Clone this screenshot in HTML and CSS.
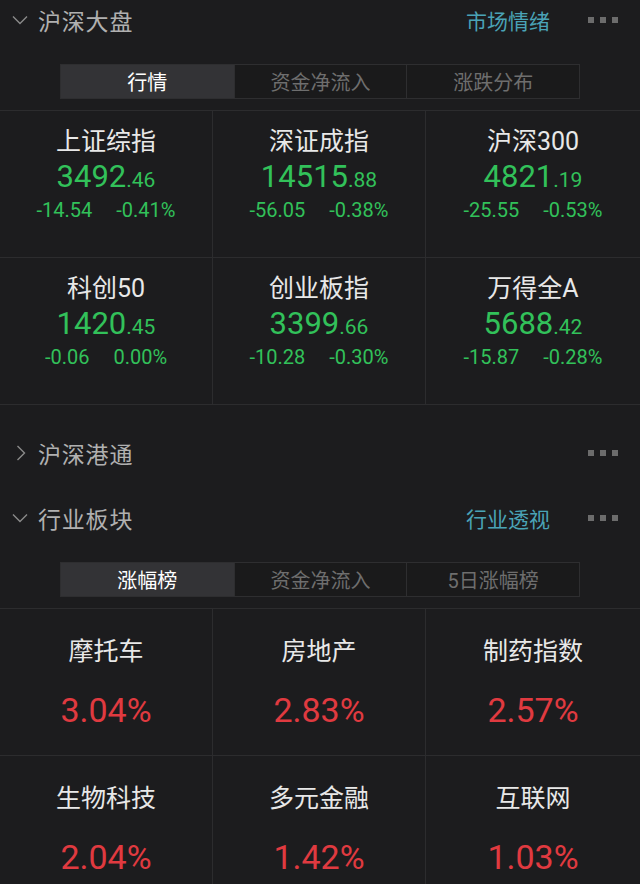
FILE: index.html
```html
<!DOCTYPE html>
<html lang="zh-CN">
<head>
<meta charset="utf-8">
<title>行情</title>
<link rel="stylesheet" href="styles.css">
</head>
<body>
<div class="page">
  <div class="sec-head sec1">
    <svg class="chev" width="16" height="10" viewBox="0 0 16 10"><path d="M1 1.5 L8 8.5 L15 1.5" fill="none" stroke="#8a8a8a" stroke-width="1.4"/></svg>
    <span class="sec-title">沪深大盘</span>
    <span class="sec-link">市场情绪</span>
    <span class="dots"><i></i><i></i><i></i></span>
  </div>
  <div class="tabs">
    <div class="tab active">行情</div>
    <div class="tab">资金净流入</div>
    <div class="tab">涨跌分布</div>
  </div>
  <div class="grid idx">
    <div class="cell"><div class="name">上证综指</div><div class="price">3492<small>.46</small></div><div class="chg"><span>-14.54</span><span>-0.41%</span></div></div>
    <div class="cell"><div class="name">深证成指</div><div class="price">14515<small>.88</small></div><div class="chg"><span>-56.05</span><span>-0.38%</span></div></div>
    <div class="cell"><div class="name">沪深300</div><div class="price">4821<small>.19</small></div><div class="chg"><span>-25.55</span><span>-0.53%</span></div></div>
    <div class="cell"><div class="name">科创50</div><div class="price">1420<small>.45</small></div><div class="chg"><span>-0.06</span><span>0.00%</span></div></div>
    <div class="cell"><div class="name">创业板指</div><div class="price">3399<small>.66</small></div><div class="chg"><span>-10.28</span><span>-0.30%</span></div></div>
    <div class="cell"><div class="name">万得全A</div><div class="price">5688<small>.42</small></div><div class="chg"><span>-15.87</span><span>-0.28%</span></div></div>
  </div>

  <div class="sec-head sec2">
    <svg class="chev-r" width="10" height="16" viewBox="0 0 10 16"><path d="M1.5 1 L8.5 8 L1.5 15" fill="none" stroke="#8a8a8a" stroke-width="1.4"/></svg>
    <span class="sec-title">沪深港通</span>
    <span class="dots"><i></i><i></i><i></i></span>
  </div>

  <div class="sec-head sec3">
    <svg class="chev" width="16" height="10" viewBox="0 0 16 10"><path d="M1 1.5 L8 8.5 L15 1.5" fill="none" stroke="#8a8a8a" stroke-width="1.4"/></svg>
    <span class="sec-title">行业板块</span>
    <span class="sec-link">行业透视</span>
    <span class="dots"><i></i><i></i><i></i></span>
  </div>
  <div class="tabs tabs2">
    <div class="tab active">涨幅榜</div>
    <div class="tab">资金净流入</div>
    <div class="tab">5日涨幅榜</div>
  </div>
  <div class="grid ind">
    <div class="cell"><div class="name">摩托车</div><div class="pct">3.04%</div></div>
    <div class="cell"><div class="name">房地产</div><div class="pct">2.83%</div></div>
    <div class="cell"><div class="name">制药指数</div><div class="pct">2.57%</div></div>
    <div class="cell"><div class="name">生物科技</div><div class="pct">2.04%</div></div>
    <div class="cell"><div class="name">多元金融</div><div class="pct">1.42%</div></div>
    <div class="cell"><div class="name">互联网</div><div class="pct">1.03%</div></div>
  </div>
</div>
</body>
</html>
```

FILE: styles.css
```css
html, body {
  margin: 0;
  padding: 0;
  background: #1c1c1e;
}
body {
  font-family: Roboto, "Noto Sans CJK SC", sans-serif;
  color: #e6e6e6;
}
.page {
  width: 640px;
  height: 884px;
  overflow: hidden;
}
.sec-head {
  height: 42px;
  display: flex;
  align-items: center;
  padding: 0 22px 0 12px;
}
.sec1 { margin-top: -1px; }
.sec2 { margin-top: 27px; }
.sec3 { margin-top: 23px; }
.chev { width: 16px; height: 10px; margin-right: 10px; }
.chev-r { width: 10px; height: 16px; margin-left: 4px; margin-right: 12px; }
.sec-title {
  font-size: 23px;
  color: #b0b0b0;
  letter-spacing: 0.8px;
  flex: 1;
}
.sec-link {
  font-size: 21px;
  color: #4aa3b6;
  margin-right: 38px;
}
.dots {
  display: flex;
  gap: 6px;
}
.dots i {
  width: 6px;
  height: 6px;
  background: #6c6c6c;
  display: block;
}
.tabs {
  margin: 23px 60px 0 60px;
  height: 35px;
  display: grid;
  grid-template-columns: 1fr 1fr 1fr;
  border: 1px solid #2e2e30;
  box-sizing: border-box;
}
.tabs2 { margin-top: 23px; }
.tab {
  display: flex;
  align-items: center;
  justify-content: center;
  font-size: 20px;
  color: #6e6e6e;
  background: #1a1a1b;
  border-left: 1px solid #2e2e30;
}
.tab:first-child { border-left: none; }
.tab.active {
  background: #333336;
  color: #ffffff;
}
.grid {
  margin-top: 11px;
  display: grid;
  grid-template-columns: 213px 213px 1fr;
  border-top: 1px solid #2c2c2e;
}
.cell {
  display: flex;
  flex-direction: column;
  align-items: center;
  border-right: 1px solid #2c2c2e;
  border-bottom: 1px solid #2c2c2e;
  box-sizing: border-box;
  height: 147px;
}
.cell:nth-child(3n) { border-right: none; }
.idx .cell { padding-top: 16px; }
.name {
  font-size: 25px;
  line-height: 30px;
  color: #e8e8e8;
}
.price {
  margin-top: 2px;
  font-size: 31px;
  line-height: 36px;
  color: #32c15a;
}
.price small {
  font-size: 21px;
}
.chg {
  font-size: 20px;
  line-height: 24px;
  color: #32c15a;
  display: flex;
  gap: 24px;
}
.ind .cell { padding-top: 28px; }
.pct {
  margin-top: 23px;
  font-size: 34px;
  line-height: 40px;
  color: #e03a40;
}
```
